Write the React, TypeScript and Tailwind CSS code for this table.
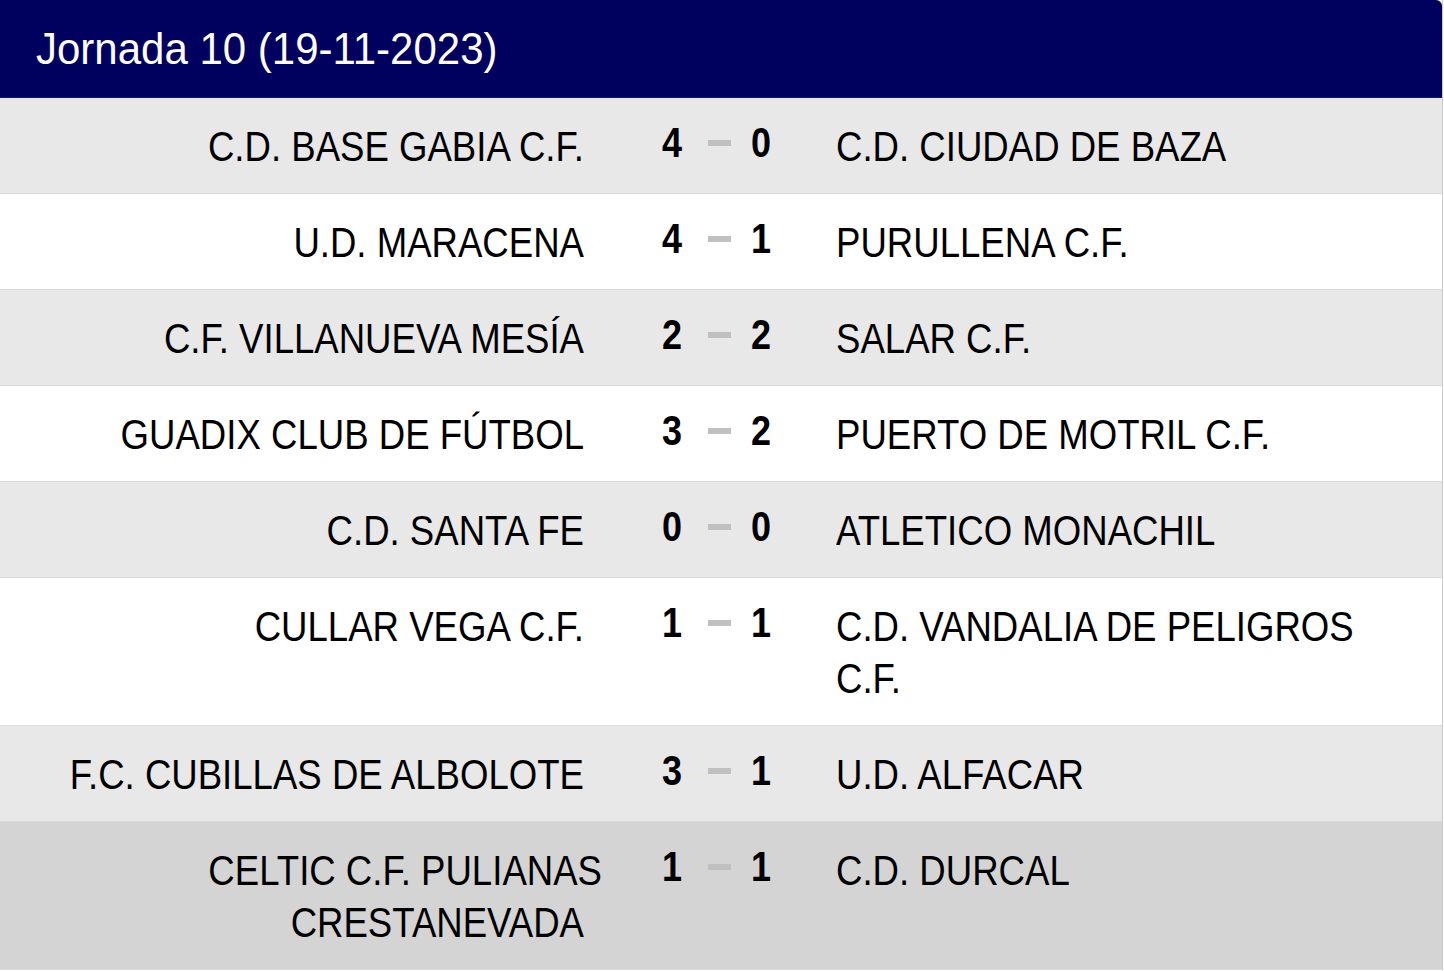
import React from "react";

type Row = {
  home: string[];
  away: string[];
  h: number;
  a: number;
  bg: string;
  homeFirstWide?: boolean;
};

const rows: Row[] = [
  { home: ["C.D. BASE GABIA C.F."], h: 4, a: 0, away: ["C.D. CIUDAD DE BAZA"], bg: "bg-[#e8e8e8]" },
  { home: ["U.D. MARACENA"], h: 4, a: 1, away: ["PURULLENA C.F."], bg: "bg-white" },
  { home: ["C.F. VILLANUEVA MESÍA"], h: 2, a: 2, away: ["SALAR C.F."], bg: "bg-[#e8e8e8]" },
  { home: ["GUADIX CLUB DE FÚTBOL"], h: 3, a: 2, away: ["PUERTO DE MOTRIL C.F."], bg: "bg-white" },
  { home: ["C.D. SANTA FE"], h: 0, a: 0, away: ["ATLETICO MONACHIL"], bg: "bg-[#e8e8e8]" },
  { home: ["CULLAR VEGA C.F."], h: 1, a: 1, away: ["C.D. VANDALIA DE PELIGROS", "C.F."], bg: "bg-white" },
  { home: ["F.C. CUBILLAS DE ALBOLOTE"], h: 3, a: 1, away: ["U.D. ALFACAR"], bg: "bg-[#e8e8e8]" },
  {
    home: ["CELTIC C.F. PULIANAS", "CRESTANEVADA"],
    h: 1,
    a: 1,
    away: ["C.D. DURCAL"],
    bg: "bg-[#d4d4d4]",
    homeFirstWide: true,
  },
];

export default function App() {
  return (
    <div
      className="w-[1444px] h-[971px] bg-white overflow-hidden text-black"
      style={{ fontFamily: '"Liberation Sans", Arial, sans-serif' }}
    >
      <div className="w-[1443px] border-r border-[#c9c9c9]">
        <div className="h-[98px] bg-[#00005f] border-b border-[#0a1a7a] rounded-tr-[6px] flex items-center pl-[36px]">
          <span className="text-[42px] leading-none text-white scale-y-[1.04] inline-block">
            Jornada 10 (19-11-2023)
          </span>
        </div>
        {rows.map((r, i) => (
          <div key={i} className={`flex items-start border-b border-[#dadada] ${r.bg}`}>
            <div className="w-[602px] pt-[23px] pb-[20px] flex flex-col items-end text-[36.6px] leading-[52px]">
              {r.home.map((line, j) => (
                <div
                  key={j}
                  className={
                    r.homeFirstWide && j === 0
                      ? "whitespace-nowrap scale-y-[1.14]"
                      : "whitespace-nowrap pr-[18px] scale-y-[1.14]"
                  }
                >
                  {line}
                </div>
              ))}
            </div>
            <div className="w-[234px] pt-[19px] pl-[49px] flex items-center h-[71px] text-[36px] leading-[52px] font-bold">
              <div className="w-[42px] flex justify-center scale-y-[1.16]">{r.h}</div>
              <div className="w-[52px] flex justify-center">
                <span className="block w-[23px] h-[6px] bg-[#c0c0c0]" />
              </div>
              <div className="w-[32px] flex justify-center scale-y-[1.16]">{r.a}</div>
            </div>
            <div className="flex-1 pt-[23px] pb-[20px] flex flex-col items-start text-[36.6px] leading-[52px]">
              {r.away.map((line, j) => (
                <div key={j} className="whitespace-nowrap scale-y-[1.14]">
                  {line}
                </div>
              ))}
            </div>
          </div>
        ))}
      </div>
    </div>
  );
}
